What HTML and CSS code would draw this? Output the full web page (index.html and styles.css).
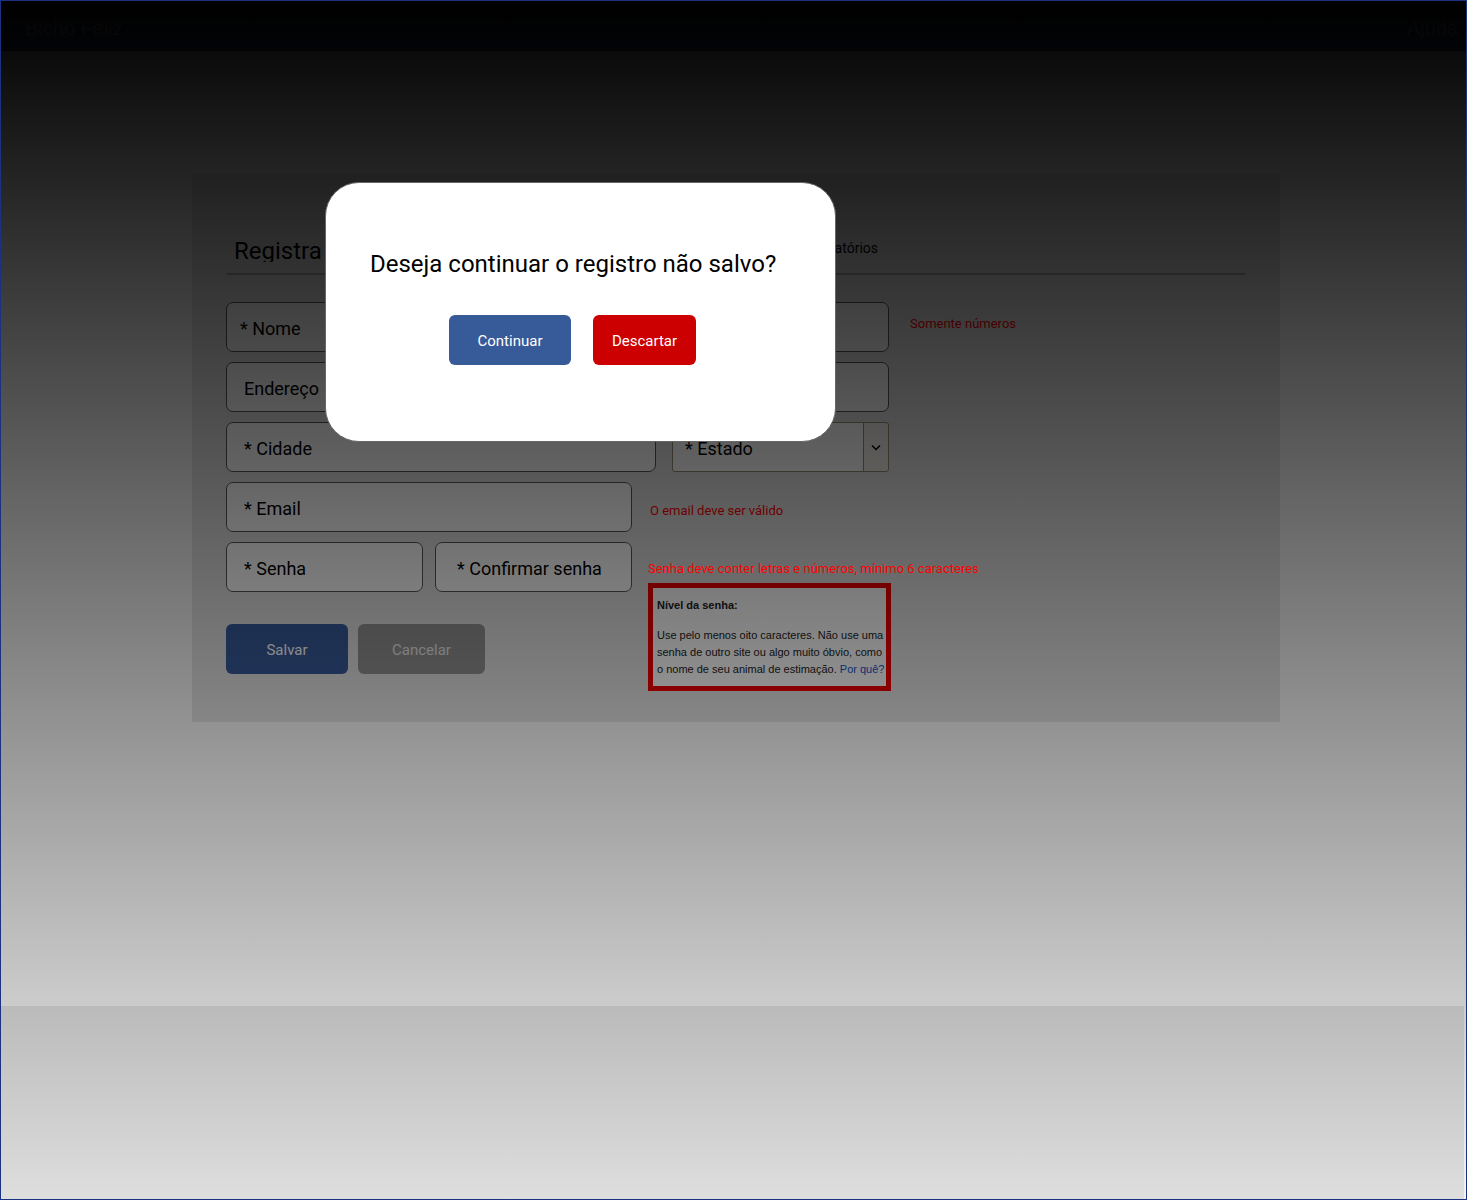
FILE: index.html
```html
<!DOCTYPE html>
<html lang="pt-BR">
<head>
<meta charset="utf-8">
<meta name="viewport" content="width=device-width, initial-scale=1">
<title>Bicho Feliz</title>
<link rel="stylesheet" href="styles.css">
</head>
<body>
<div class="page">
  <header class="topbar">
    <a class="topbar-link" href="#">Bicho Feliz</a>
    <a class="topbar-link" href="#">Ajuda</a>
  </header>

  <main class="content">
    <section class="card">
      <div class="card-head">
        <h1 class="card-title">Registra</h1>
        <p class="card-note">* Campos obrigatórios</p>
      </div>

      <form class="form">
        <div class="row row-spaced">
          <div class="fields fields-full">
            <input class="field field-name" type="text" placeholder="* Nome" aria-label="Nome">
            <input class="field field-side" type="tel" aria-label="Telefone">
          </div>
          <p class="hint">Somente números</p>
        </div>
        <div class="row">
          <div class="fields fields-full">
            <input class="field field-grow" type="text" placeholder="Endereço" aria-label="Endereço">
          </div>
        </div>
        <div class="row">
          <div class="fields fields-full">
            <input class="field field-grow" type="text" placeholder="* Cidade" aria-label="Cidade">
            <div class="select-box field-side">
              <select class="select" aria-label="Estado"><option>* Estado</option></select>
              <svg class="select-arrow" viewBox="0 0 10 8" aria-hidden="true"><path d="M1 2.5 5 6.5 9 2.5"/></svg>
            </div>
          </div>
        </div>
        <div class="row">
          <div class="fields fields-short">
            <input class="field field-grow" type="email" placeholder="* Email" aria-label="Email">
          </div>
          <p class="hint">O email deve ser válido</p>
        </div>
        <div class="password-area">
          <div class="fields-short">
            <div class="fields-pair">
              <input class="field" type="password" placeholder="* Senha" aria-label="Senha">
              <input class="field field-confirm" type="password" placeholder="* Confirmar senha" aria-label="Confirmar senha">
            </div>
            <div class="form-actions">
              <button class="button button-primary" type="submit">Salvar</button>
              <button class="button button-muted" type="button">Cancelar</button>
            </div>
          </div>
          <div class="password-help">
            <p class="hint hint-active">Senha deve conter letras e números, mínimo 6 caracteres</p>
            <div class="strength">
              <strong class="strength-title">Nível da senha:</strong>
              <p class="strength-text">Use pelo menos oito caracteres. Não use uma senha de outro site ou algo muito óbvio, como o nome de seu animal de estimação. <a class="strength-link" href="#">Por quê?</a></p>
            </div>
          </div>
        </div>
      </form>
    </section>
  </main>

  <footer class="footer"></footer>

  <div class="shade"></div>

  <div class="modal" role="dialog" aria-modal="true" aria-labelledby="modal-title">
    <h2 class="modal-title" id="modal-title">Deseja continuar o registro não salvo?</h2>
    <div class="modal-actions">
      <button class="button button-primary" type="button">Continuar</button>
      <button class="button button-danger" type="button">Descartar</button>
    </div>
  </div>
</div>
</body>
</html>
```
FILE: styles.css
```css
* {
  box-sizing: border-box;
}

body,
h1,
h2,
p {
  margin: 0;
}

body,
input,
select,
button {
  font-family: Roboto, "Liberation Sans", sans-serif;
}

.page {
  position: relative;
  display: flex;
  flex-direction: column;
  min-height: 100vh;
  border: 1px solid #1a3282;
  background: #f3f3f3;
}

/* Top bar */
.topbar {
  display: flex;
  justify-content: space-between;
  align-items: center;
  height: 50px;
  padding: 4px 8px 0 24px;
  background: #3b5998;
}

.topbar-link {
  color: #fff;
  font-family: "Liberation Sans", sans-serif;
  font-size: 20px;
  line-height: 24px;
  text-decoration: none;
}

/* Registration card */
.content {
  flex: 1;
  padding: 123px 186px 40px 191px;
}

.card {
  padding: 60px 34px 31px;
  background: #dedede;
}

.card-head {
  display: flex;
  justify-content: space-between;
  height: 41px;
  padding: 0 368px 0 8px;
  border-bottom: 2px solid #a8a8a8;
}

.card-title {
  height: 28px;
  overflow: hidden;
  font-size: 24px;
  font-weight: 400;
  line-height: 34px;
}

.card-note {
  font-size: 14px;
  line-height: 28px;
}

.form {
  display: flex;
  flex-direction: column;
  gap: 10px;
  margin-top: 27px;
}

.row {
  display: flex;
  align-items: center;
  gap: 18px;
}

.row-spaced {
  gap: 21px;
}

.fields {
  display: flex;
  gap: 16px;
}

.fields-full {
  width: 663px;
}

.fields-short {
  width: 406px;
}

.fields-pair {
  display: grid;
  grid-template-columns: 1fr 1fr;
  gap: 12px;
}

.field {
  width: 100%;
  min-width: 0;
  height: 50px;
  padding: 2px 17px 0;
  border: 1px solid #585858;
  border-radius: 7px;
  background: #fcfcfc;
  color: #000;
  font-size: 18px;
}

.field::placeholder {
  color: #000;
  opacity: 1;
}

.field-grow {
  flex: 1;
}

.field-name {
  flex: 1;
  padding-left: 13px;
}

.field-confirm {
  padding-left: 21px;
}

.field-side {
  flex: none;
  width: 217px;
}

.select-box {
  display: grid;
  grid-template-columns: 1fr 25px;
  height: 50px;
  border: 1px solid #968d78;
  border-radius: 3px;
  background: linear-gradient(to left, #eeebe5 24px, #968d78 24px, #968d78 25px, #fcfcfc 25px);
}

.select {
  grid-area: 1 / 1 / 2 / 3;
  padding: 2px 12px 0;
  border: 0;
  appearance: none;
  background: none;
  color: #000;
  font-size: 18px;
}

.select-arrow {
  grid-area: 1 / 2 / 2 / 3;
  place-self: center;
  width: 10px;
  height: 8px;
  fill: none;
  stroke: #000;
  stroke-width: 1.5;
  pointer-events: none;
}

.hint {
  color: #f00;
  font-size: 13px;
  line-height: 16px;
}

.row .hint {
  padding-top: 8px;
}

.row-spaced .hint {
  padding: 0 0 6px;
}

.hint-active {
  position: relative;
  z-index: 2;
}

.password-area {
  display: flex;
  gap: 16px;
}

.form-actions {
  display: flex;
  gap: 10px;
  margin-top: 32px;
}

.password-help {
  display: flex;
  flex-direction: column;
  gap: 6px;
  padding-top: 19px;
}

.strength {
  width: 243px;
  padding: 9px 0 8px 4px;
  border: 5px solid #f00000;
  background: #fafafa;
  color: #222;
  font-family: "Liberation Sans", sans-serif;
  font-size: 11px;
  line-height: 17px;
}

.strength-title {
  display: block;
  margin-bottom: 13px;
}

.strength-link {
  color: #15c;
  text-decoration: none;
}

/* Buttons */
.button {
  width: 122px;
  height: 50px;
  padding: 2px 0 0;
  border: 0;
  border-radius: 6px;
  color: #fff;
  font-size: 15px;
}

.button-primary {
  background: #375a99;
}

.button-muted {
  width: 127px;
  background: #909090;
  color: #e6e6e6;
}

.button-danger {
  width: 103px;
  background: #c00;
}

/* Footer */
.footer {
  height: 193px;
  margin-right: 2px;
  background: #dedede;
}

/* Fade over the page, behind the dialog */
.shade {
  position: absolute;
  inset: 0;
  z-index: 1;
  background: linear-gradient(#000, transparent);
}

.modal {
  position: absolute;
  top: 181px;
  left: 324px;
  z-index: 3;
  width: 511px;
  padding: 65px 44px 76px;
  border: 1px solid #666;
  border-radius: 34px;
  background: #fff;
}

.modal-title {
  font-size: 24px;
  font-weight: 400;
  line-height: 32px;
}

.modal-actions {
  display: flex;
  gap: 22px;
  margin-top: 35px;
  padding-left: 79px;
}
```
